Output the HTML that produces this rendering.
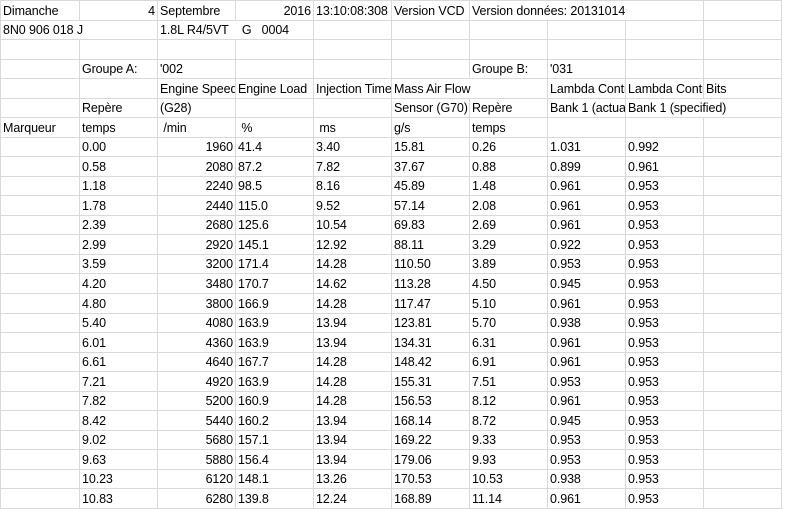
<!DOCTYPE html>
<html><head><meta charset="utf-8"><style>
html,body{margin:0;padding:0;background:#fff;width:800px;height:508px;overflow:hidden}
table{border-collapse:collapse;table-layout:fixed;position:absolute;left:0;top:0;width:782px}
td{border:1px solid #d9d9d9;height:18.5px;padding:0 0 0 2px;font-family:"Liberation Sans",sans-serif;font-size:12.5px;letter-spacing:-0.1px;color:#000;white-space:nowrap;overflow:hidden;line-height:18px;vertical-align:bottom}
td.r{text-align:right;padding-right:2px}
td.v{overflow:visible}
tr{height:19.54px}
</style></head><body>
<table>
<colgroup><col style="width:79px"><col style="width:78px"><col style="width:78px"><col style="width:78px"><col style="width:78px"><col style="width:78px"><col style="width:78px"><col style="width:78px"><col style="width:78px"><col style="width:78px"></colgroup>
<tr><td>Dimanche</td><td class="r">4</td><td>Septembre</td><td class="r">2016</td><td>13:10:08:308</td><td>Version VCD</td><td class="v" colspan="3">Version données: 20131014</td><td></td></tr>
<tr><td colspan="2">8N0 906 018 J</td><td colspan="2">1.8L R4/5VT &nbsp;&nbsp; G &nbsp; 0004</td><td></td><td></td><td></td><td></td><td></td><td></td></tr>
<tr><td></td><td></td><td></td><td></td><td></td><td></td><td></td><td></td><td></td><td></td></tr>
<tr><td></td><td>Groupe A:</td><td>'002</td><td></td><td></td><td></td><td>Groupe B:</td><td>'031</td><td></td><td></td></tr>
<tr><td></td><td></td><td>Engine Speed</td><td>Engine Load</td><td>Injection Time</td><td class="v" colspan="2">Mass Air Flow</td><td>Lambda Control</td><td>Lambda Control</td><td>Bits</td></tr>
<tr><td></td><td>Repère</td><td>(G28)</td><td></td><td></td><td>Sensor (G70)</td><td>Repère</td><td>Bank 1 (actual)</td><td class="v" colspan="2">Bank 1 (specified)</td></tr>
<tr><td>Marqueur</td><td>temps</td><td>&nbsp;/min</td><td>&nbsp;%</td><td>&nbsp;ms</td><td>g/s</td><td>temps</td><td></td><td></td><td></td></tr>
<tr><td></td><td>0.00</td><td class="r">1960</td><td>41.4</td><td>3.40</td><td>15.81</td><td>0.26</td><td>1.031</td><td>0.992</td><td></td></tr>
<tr><td></td><td>0.58</td><td class="r">2080</td><td>87.2</td><td>7.82</td><td>37.67</td><td>0.88</td><td>0.899</td><td>0.961</td><td></td></tr>
<tr><td></td><td>1.18</td><td class="r">2240</td><td>98.5</td><td>8.16</td><td>45.89</td><td>1.48</td><td>0.961</td><td>0.953</td><td></td></tr>
<tr><td></td><td>1.78</td><td class="r">2440</td><td>115.0</td><td>9.52</td><td>57.14</td><td>2.08</td><td>0.961</td><td>0.953</td><td></td></tr>
<tr><td></td><td>2.39</td><td class="r">2680</td><td>125.6</td><td>10.54</td><td>69.83</td><td>2.69</td><td>0.961</td><td>0.953</td><td></td></tr>
<tr><td></td><td>2.99</td><td class="r">2920</td><td>145.1</td><td>12.92</td><td>88.11</td><td>3.29</td><td>0.922</td><td>0.953</td><td></td></tr>
<tr><td></td><td>3.59</td><td class="r">3200</td><td>171.4</td><td>14.28</td><td>110.50</td><td>3.89</td><td>0.953</td><td>0.953</td><td></td></tr>
<tr><td></td><td>4.20</td><td class="r">3480</td><td>170.7</td><td>14.62</td><td>113.28</td><td>4.50</td><td>0.945</td><td>0.953</td><td></td></tr>
<tr><td></td><td>4.80</td><td class="r">3800</td><td>166.9</td><td>14.28</td><td>117.47</td><td>5.10</td><td>0.961</td><td>0.953</td><td></td></tr>
<tr><td></td><td>5.40</td><td class="r">4080</td><td>163.9</td><td>13.94</td><td>123.81</td><td>5.70</td><td>0.938</td><td>0.953</td><td></td></tr>
<tr><td></td><td>6.01</td><td class="r">4360</td><td>163.9</td><td>13.94</td><td>134.31</td><td>6.31</td><td>0.961</td><td>0.953</td><td></td></tr>
<tr><td></td><td>6.61</td><td class="r">4640</td><td>167.7</td><td>14.28</td><td>148.42</td><td>6.91</td><td>0.961</td><td>0.953</td><td></td></tr>
<tr><td></td><td>7.21</td><td class="r">4920</td><td>163.9</td><td>14.28</td><td>155.31</td><td>7.51</td><td>0.953</td><td>0.953</td><td></td></tr>
<tr><td></td><td>7.82</td><td class="r">5200</td><td>160.9</td><td>14.28</td><td>156.53</td><td>8.12</td><td>0.961</td><td>0.953</td><td></td></tr>
<tr><td></td><td>8.42</td><td class="r">5440</td><td>160.2</td><td>13.94</td><td>168.14</td><td>8.72</td><td>0.945</td><td>0.953</td><td></td></tr>
<tr><td></td><td>9.02</td><td class="r">5680</td><td>157.1</td><td>13.94</td><td>169.22</td><td>9.33</td><td>0.953</td><td>0.953</td><td></td></tr>
<tr><td></td><td>9.63</td><td class="r">5880</td><td>156.4</td><td>13.94</td><td>179.06</td><td>9.93</td><td>0.953</td><td>0.953</td><td></td></tr>
<tr><td></td><td>10.23</td><td class="r">6120</td><td>148.1</td><td>13.26</td><td>170.53</td><td>10.53</td><td>0.938</td><td>0.953</td><td></td></tr>
<tr><td></td><td>10.83</td><td class="r">6280</td><td>139.8</td><td>12.24</td><td>168.89</td><td>11.14</td><td>0.961</td><td>0.953</td><td></td></tr>
</table>
</body></html>
